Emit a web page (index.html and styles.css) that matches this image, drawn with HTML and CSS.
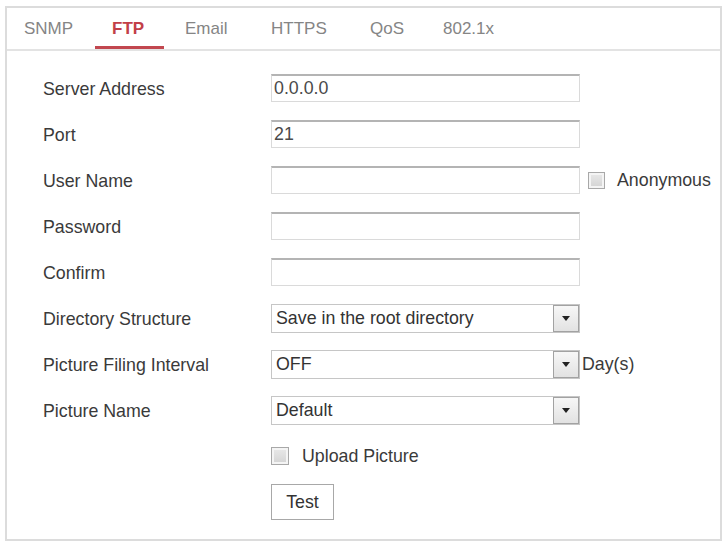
FILE: index.html
```html
<!DOCTYPE html>
<html lang="en">
<head>
<meta charset="utf-8">
<title>FTP</title>
<link rel="stylesheet" href="styles.css">
</head>
<body>
<div class="panel">
  <nav class="tabs">
    <div class="tab">SNMP</div>
    <div class="tab active">FTP</div>
    <div class="tab">Email</div>
    <div class="tab">HTTPS</div>
    <div class="tab">QoS</div>
    <div class="tab">802.1x</div>
  </nav>
  <form class="form">
    <div class="row">
      <label class="label">Server Address</label>
      <input class="field" type="text" value="0.0.0.0">
    </div>
    <div class="row">
      <label class="label">Port</label>
      <input class="field" type="text" value="21">
    </div>
    <div class="row">
      <label class="label">User Name</label>
      <div class="inline">
        <input class="field" type="text" value="">
        <span class="check check-anon"></span>
        <span class="check-text">Anonymous</span>
      </div>
    </div>
    <div class="row">
      <label class="label">Password</label>
      <input class="field" type="password" value="">
    </div>
    <div class="row">
      <label class="label">Confirm</label>
      <input class="field" type="password" value="">
    </div>
    <div class="row">
      <label class="label">Directory Structure</label>
      <div class="select"><span class="select-text">Save in the root directory</span><span class="select-btn"><span class="arrow"></span></span></div>
    </div>
    <div class="row">
      <label class="label">Picture Filing Interval</label>
      <div class="inline">
        <div class="select"><span class="select-text">OFF</span><span class="select-btn"><span class="arrow"></span></span></div>
        <span class="unit">Day(s)</span>
      </div>
    </div>
    <div class="row">
      <label class="label">Picture Name</label>
      <div class="select"><span class="select-text">Default</span><span class="select-btn"><span class="arrow"></span></span></div>
    </div>
    <div class="row">
      <span class="label"></span>
      <div class="inline">
        <span class="check"></span>
        <span class="check-text upload-text">Upload Picture</span>
      </div>
    </div>
    <div class="row">
      <span class="label"></span>
      <div class="inline">
        <button type="button" class="btn">Test</button>
      </div>
    </div>
  </form>
</div>
</body>
</html>
```

FILE: styles.css
```css
* { box-sizing: border-box; }

html, body {
  margin: 0;
  padding: 0;
  background: #ffffff;
}

body {
  font-family: "Liberation Sans", Arial, sans-serif;
  color: #3a3a3a;
}

.panel {
  margin: 6px 1px 0 5px;
  height: 535px;
  border: 2px solid #dcdcdc;
  background: #fff;
}

.tabs {
  display: grid;
  grid-template-columns: 88px 73px 86px 99px 73px auto;
  height: 43px;
  border-bottom: 2px solid #e3e3e3;
}

.tab {
  justify-self: start;
  display: flex;
  align-items: center;
  height: 41px;
  padding: 0 20px 0 17px;
  font-size: 17px;
  color: #858585;
}

.tab.active {
  color: #c23f48;
  font-weight: bold;
  border-bottom: 3px solid #c2474f;
  padding-top: 3px;
}

.form {
  margin: 0;
  padding: 14px 0 0 36px;
}

.row {
  display: grid;
  grid-template-columns: 228px auto;
  align-items: center;
  height: 46px;
  font-size: 17.8px;
}

.label {
  color: #3a3a3a;
  padding-top: 3px;
}

.inline {
  display: flex;
  align-items: center;
}

.field {
  width: 309px;
  height: 28px;
  margin: 0;
  padding: 0 2px;
  border: 1px solid #dadada;
  border-top: 2px solid #b4b4b4;
  border-radius: 0;
  background: #fff;
  font-family: inherit;
  font-size: 17.8px;
  color: #4a4a4a;
  outline: none;
}

.check {
  display: inline-block;
  width: 18px;
  height: 18px;
  border: 1px solid #a8a8a8;
  background: linear-gradient(#e9e9e9, #d3d3d3);
  box-shadow: inset 0 0 0 2px #f4f4f4;
}

.check-anon {
  margin-left: 8px;
  width: 17px;
  height: 17px;
}

.check-text {
  margin-left: 12px;
  color: #3a3a3a;
}

.upload-text {
  margin-left: 13px;
  padding-top: 1px;
}

.select {
  display: flex;
  align-items: center;
  justify-content: space-between;
  width: 309px;
  height: 29px;
  border: 1px solid #c6c6c6;
  background: #fff;
}

.select-text {
  padding-left: 4px;
  color: #333;
}

.select-btn {
  display: flex;
  align-items: center;
  justify-content: center;
  width: 26px;
  height: 27px;
  border: 1px solid #a2a2a2;
  background: linear-gradient(#f7f7f7, #e2e2e2);
}

.arrow {
  width: 0;
  height: 0;
  border-left: 4px solid transparent;
  border-right: 4px solid transparent;
  border-top: 5px solid #222;
}

.unit {
  margin-left: 2px;
  color: #3a3a3a;
}

.btn {
  width: 63px;
  height: 36px;
  margin: 0;
  padding: 0;
  border: 1px solid #a8a8a8;
  border-radius: 0;
  background: #fff;
  font-family: inherit;
  font-size: 17.8px;
  color: #333;
}
```
